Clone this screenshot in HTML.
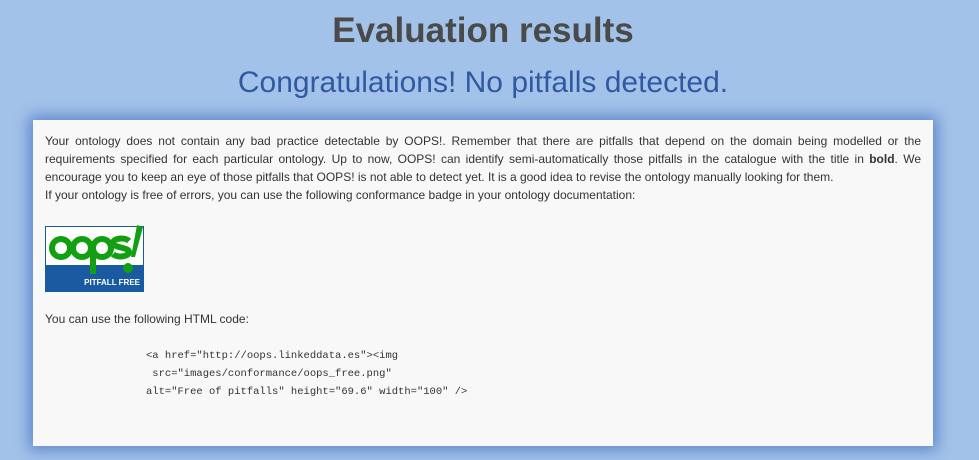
<!DOCTYPE html>
<html><head><style>
body{margin:0;width:979px;height:460px;background:#a3c2e9;font-family:"Liberation Sans",sans-serif;overflow:hidden;position:relative}
h1{position:absolute;top:11px;left:0;width:966px;text-align:center;margin:0;font-size:35px;color:#4a4a4a;font-weight:bold;line-height:40px}
h2{position:absolute;top:65px;left:0;width:966px;text-align:center;margin:0;font-size:30px;color:#2f5aa2;font-weight:normal;line-height:36px}
.box{position:absolute;left:33px;top:120px;width:900px;height:326px;background:#f8f8f8;box-shadow:0 0 14px 4px #5c86cc}
p{margin:0;position:absolute;left:12px;width:876px;font-size:12px;line-height:18px;color:#333;text-align:justify}
pre{position:absolute;left:113px;top:227px;margin:0;font-family:"Liberation Mono",monospace;font-size:10.5px;line-height:18px;color:#333}
</style></head><body>
<h1>Evaluation results</h1>
<h2>Congratulations! No pitfalls detected.</h2>
<div class="box">
<p style="top:12px">Your ontology does not contain any bad practice detectable by OOPS!. Remember that there are pitfalls that depend on the domain being modelled or the requirements specified for each particular ontology. Up to now, OOPS! can identify semi-automatically those pitfalls in the catalogue with the title in <b>bold</b>. We encourage you to keep an eye of those pitfalls that OOPS! is not able to detect yet. It is a good idea to revise the ontology manually looking for them.<br>If your ontology is free of errors, you can use the following conformance badge in your ontology documentation:</p>
<svg style="position:absolute;left:12px;top:102px" width="100" height="70" viewBox="0 0 100 70">
<rect x="0.5" y="4.5" width="98" height="65" fill="#fff" stroke="#1a5aa0"/>
<rect x="0" y="43" width="99" height="27" fill="#1a5aa0"/>
<g fill="none" stroke="#12a012" stroke-width="6">
<circle cx="16" cy="26" r="9"/><circle cx="37" cy="26" r="9"/><circle cx="57" cy="26" r="9"/>
<line x1="48" y1="26" x2="48" y2="52"/>
<path d="M84 19c-4-4-16-3-16 2s16 4 16 9-12 6-16 2"/>
</g>
<path d="M92 3l6 2-8 30h-4z" fill="#12a012"/>
<circle cx="83" cy="46" r="5" fill="#12a012"/>
<text x="95" y="63" text-anchor="end" font-size="8" font-weight="bold" fill="#fff" font-family="Liberation Sans">PITFALL FREE</text>
</svg>
<p style="top:190px">You can use the following HTML code:</p>
<pre>&lt;a href="http://oops.linkeddata.es"&gt;&lt;img
 src="images/conformance/oops_free.png"
alt="Free of pitfalls" height="69.6" width="100" /&gt;</pre>
</div>
</body></html>
